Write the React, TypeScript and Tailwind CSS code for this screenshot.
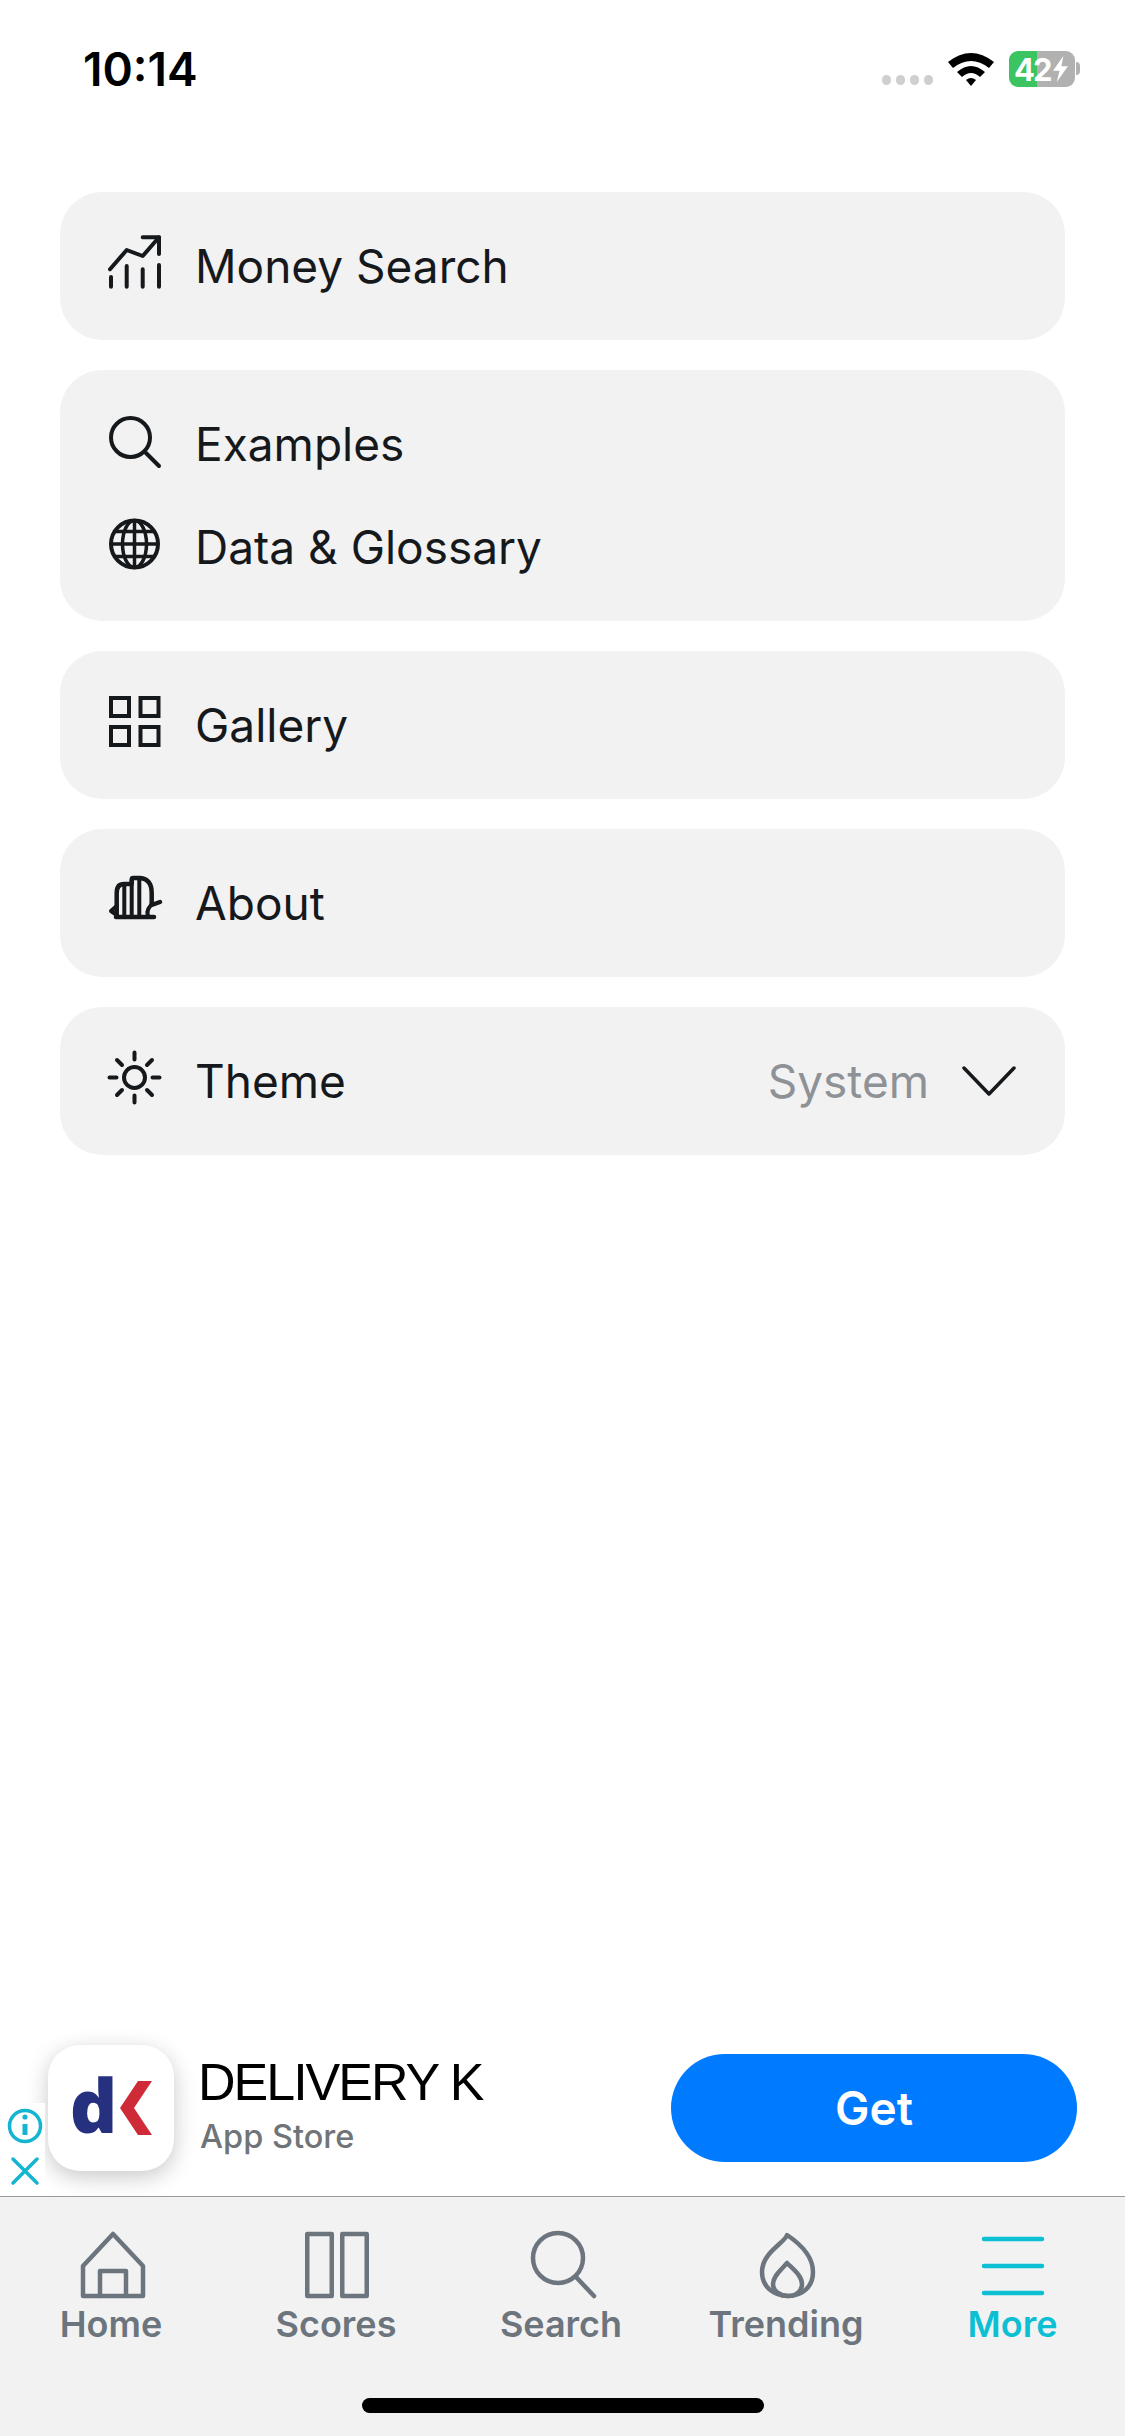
import React from "react";

const S = "#16191c";

function Icon({ children }: { children: React.ReactNode }) {
  return (
    <svg viewBox="0 0 60 60" className="w-[60px] h-[60px] shrink-0 -mt-[6px]" fill="none" stroke={S} strokeWidth="4" strokeLinecap="round" strokeLinejoin="round">
      {children}
    </svg>
  );
}

function Row({ icon, label, right }: { icon: React.ReactNode; label: string; right?: React.ReactNode }) {
  return (
    <div className="flex items-center h-[103px] pl-[44px] pr-[49px]">
      {icon}
      <span className="ml-[31px] text-[46px] leading-none text-[#16191c]">{label}</span>
      {right}
    </div>
  );
}

function Card({ children }: { children: React.ReactNode }) {
  return <div className="rounded-[42px] bg-[#f2f2f3] py-[22.5px]">{children}</div>;
}

const Money = (
  <Icon>
    <path d="M7 44V53.7M22.7 33V53.7M38.7 36.3V53.7M55 32V53.7" />
    <path d="M6 36.3 L22.7 17 L38.7 23 L55 4.3" />
    <path d="M38.7 4.3 H55 V21" />
  </Icon>
);
const Lens = (
  <Icon>
    <circle cx="26.5" cy="26.5" r="19.5" />
    <path d="M42 42 L55 55" />
  </Icon>
);
const Globe = (
  <Icon>
    <circle cx="30.5" cy="30" r="23.5" />
    <ellipse cx="30.5" cy="30" rx="12" ry="23.5" strokeWidth="3.5" />
    <path d="M30.5 6.5v47M7 30h47M10.5 17.5h40M10.5 42.5h40" strokeWidth="3.5" strokeLinecap="butt" />
  </Icon>
);
const Grid = (
  <Icon>
    <rect x="7" y="6" width="18" height="18" strokeWidth="4" strokeLinejoin="miter" />
    <rect x="36.5" y="6" width="18" height="18" strokeWidth="4" strokeLinejoin="miter" />
    <rect x="7" y="35" width="18" height="18" strokeWidth="4" strokeLinejoin="miter" />
    <rect x="36.5" y="35" width="18" height="18" strokeWidth="4" strokeLinejoin="miter" />
  </Icon>
);
const About = (
  <Icon>
    <path d="M12 47 H50 M12.7 47 V23 Q12.7 14 20 14 H27.7 V10 Q27.7 8 29 8 H36 Q47.7 9 47.7 23 V35 L56 32" strokeWidth="4.5" />
    <path d="M12.7 36 L7 41 L12.7 45 M20.3 16 V47 M27.7 10 V47 M35.3 10 V47 M47 35 Q41 42 45 47" strokeWidth="4" />
  </Icon>
);
const Sun = (
  <Icon>
    <g transform="translate(0.5 -0.5)">
      <circle cx="30" cy="30" r="10.5" />
      <path d="M30 5v7M30 48v7M5 30h7M48 30h7M12.5 12.5l5 5M47.5 12.5l-5 5M12.5 47.5l5-5M47.5 47.5l-5-5" />
    </g>
  </Icon>
);

const G = "#6c757d";

function Tab({ label, active, children }: { label: string; active?: boolean; children: React.ReactNode }) {
  return (
    <div className="flex flex-col items-center">
      <svg viewBox="0 0 70 70" className="w-[70px] h-[70px]" fill="none" stroke={active ? "#0dbfd3" : G} strokeWidth="4.5" strokeLinecap="round" strokeLinejoin="round">
        {children}
      </svg>
      <span className={`text-[36px] leading-[44px] font-semibold mt-[2px] ${active ? "text-[#0dbfd3]" : "text-[#6c757d] pr-[3px]"}`}>{label}</span>
    </div>
  );
}

export default function App() {
  return (
    <div className="w-[1125px] h-[2436px] bg-white flex flex-col font-['Inter',sans-serif] overflow-hidden">
      {/* status bar */}
      <div className="h-[192px] shrink-0 pt-[46px] pl-[83px] pr-[50px] flex justify-between items-start">
        <span className="text-[46px] leading-[46px] font-semibold text-black">10:14</span>
        <div className="flex items-center mt-[5px]">
          <div className="flex gap-[5px] mt-[21px] mr-[15px]">
            <i className="block w-[9px] h-[10px] rounded-full bg-[#cfcfcf]" />
            <i className="block w-[9px] h-[10px] rounded-full bg-[#cfcfcf]" />
            <i className="block w-[9px] h-[10px] rounded-full bg-[#cfcfcf]" />
            <i className="block w-[9px] h-[10px] rounded-full bg-[#cfcfcf]" />
          </div>
          <svg viewBox="0 0 46 34" className="w-[46px] h-[34px] mr-[15px]" fill="#000">
            <path d="M0 10 Q23 -8 46 10 L41 16 Q23 2 5 16 Z" />
            <path d="M9 20 Q23 8 37 20 L32 25 Q23 17 14 25 Z" />
            <path d="M18 28 Q23 24 28 28 L23 34 Z" />
          </svg>
          <div className="relative w-[66px] h-[36px] rounded-[9px] bg-[linear-gradient(90deg,#3bc45f_0,#3bc45f_28px,#b1b1b1_28px)] flex items-center pl-[5px] text-white text-[31px] font-bold leading-none tracking-[-2px]">
            42
            <svg viewBox="0 0 16 28" className="w-[15px] h-[26px] ml-[2px] shrink-0" fill="#fff"><path d="M11 0 L0 16 H7 L4 28 L16 11 H9 Z" /></svg>
            <i className="absolute -right-[5px] top-[11px] block w-[4px] h-[13px] rounded-r-full bg-[#b1b1b1]" />
          </div>
        </div>
      </div>

      {/* menu */}
      <div className="flex-1 px-[60px]">
        <div className="flex flex-col gap-[30px]">
          <Card><Row icon={Money} label="Money Search" /></Card>
          <Card>
            <Row icon={Lens} label="Examples" />
            <Row icon={Globe} label="Data & Glossary" />
          </Card>
          <Card><Row icon={Grid} label="Gallery" /></Card>
          <Card><Row icon={About} label="About" /></Card>
          <Card>
            <Row
              icon={Sun}
              label="Theme"
              right={
                <div className="ml-auto flex items-center">
                  <span className="text-[46px] leading-none text-[#8e9296]">System</span>
                  <svg viewBox="0 0 54 32" className="w-[54px] h-[32px] ml-[33px]" fill="none" stroke={S} strokeWidth="3.5" strokeLinecap="round" strokeLinejoin="round">
                    <path d="M2 3 L27 29 L52 3" />
                  </svg>
                </div>
              }
            />
          </Card>
        </div>
      </div>

      {/* ad */}
      <div className="relative h-[176px] shrink-0 flex items-center pl-[48px] pr-[48px]">
        <div className="w-[126px] h-[126px] mt-[-1px] rounded-[32px] bg-white shadow-[0_6px_22px_rgba(0,0,0,0.22)] flex items-center justify-center">
          <span className="text-[74px] leading-none font-extrabold text-[#25307f] font-['Open_Sans',sans-serif] tracking-[-1px] -mt-[6px]">d</span>
          <svg viewBox="0 0 32 54" className="w-[32px] h-[54px] ml-[4px]" fill="#cf2a38">
            <path d="M0 27 L18 0 H32 L14 27 L32 54 H18 Z" />
          </svg>
        </div>
        <div className="ml-[24px] flex flex-col -mt-[10px]">
          <span className="text-[52px] leading-[60px] text-black font-['Liberation_Sans',sans-serif] tracking-[-2px]">DELIVERY K</span>
          <span className="text-[32.5px] leading-[36px] mt-[7px] ml-[2px] font-medium text-[#707478]">App Store</span>
        </div>
        <div className="ml-auto w-[406px] h-[108px] rounded-full bg-[#007aff] flex items-center justify-center text-white text-[46px] font-semibold">Get</div>
        <div className="absolute left-0 top-[83px] w-[45px] h-[93px] bg-white">
          <svg viewBox="0 0 45 93" className="w-[45px] h-[93px]" fill="none" stroke="#13b5d1" strokeWidth="3.5" strokeLinecap="round">
            <circle cx="25" cy="23" r="15.5" />
            <path d="M25 21v11" strokeWidth="5" strokeLinecap="butt" />
            <circle cx="25" cy="14" r="2.6" fill="#13b5d1" stroke="none" />
            <path d="M13 56 L37 80 M37 56 L13 80" />
          </svg>
        </div>
      </div>

      {/* tab bar */}
      <div className="h-[240px] shrink-0 border-t border-t-[#9a9a9a] bg-[#f2f2f3] relative">
        <div className="grid grid-cols-5 pt-[33px]">
          <Tab label="Home">
            <path d="M5 66 V36 L35 4 L65 36 V66 Z" />
            <path d="M22 66 V41 H48 V66" />
          </Tab>
          <Tab label="Scores">
            <rect x="4.25" y="4" width="24.5" height="62" />
            <rect x="39.25" y="4" width="24.5" height="62" />
          </Tab>
          <Tab label="Search">
            <circle cx="30" cy="28" r="25" />
            <path d="M48 47 L66 66" />
          </Tab>
          <Tab label="Trending">
            <path d="M34 5 C33 12 9 22 9 42 C9 57 21 66 35 66 C49 66 60 57 60 42 C60 26 46 13 34 5 Z" />
            <path d="M34 33 C28 40 20 46 20 54 C20 61 27 66 35 66 C43 66 49 61 49 54 C49 46 41 40 34 33 Z" />
          </Tab>
          <Tab label="More" active>
            <path d="M6 9 H64 M6 36 H64 M6 63 H64" />
          </Tab>
        </div>
        <div className="absolute left-[362px] top-[201px] w-[402px] h-[15px] rounded-full bg-black" />
      </div>
    </div>
  );
}
